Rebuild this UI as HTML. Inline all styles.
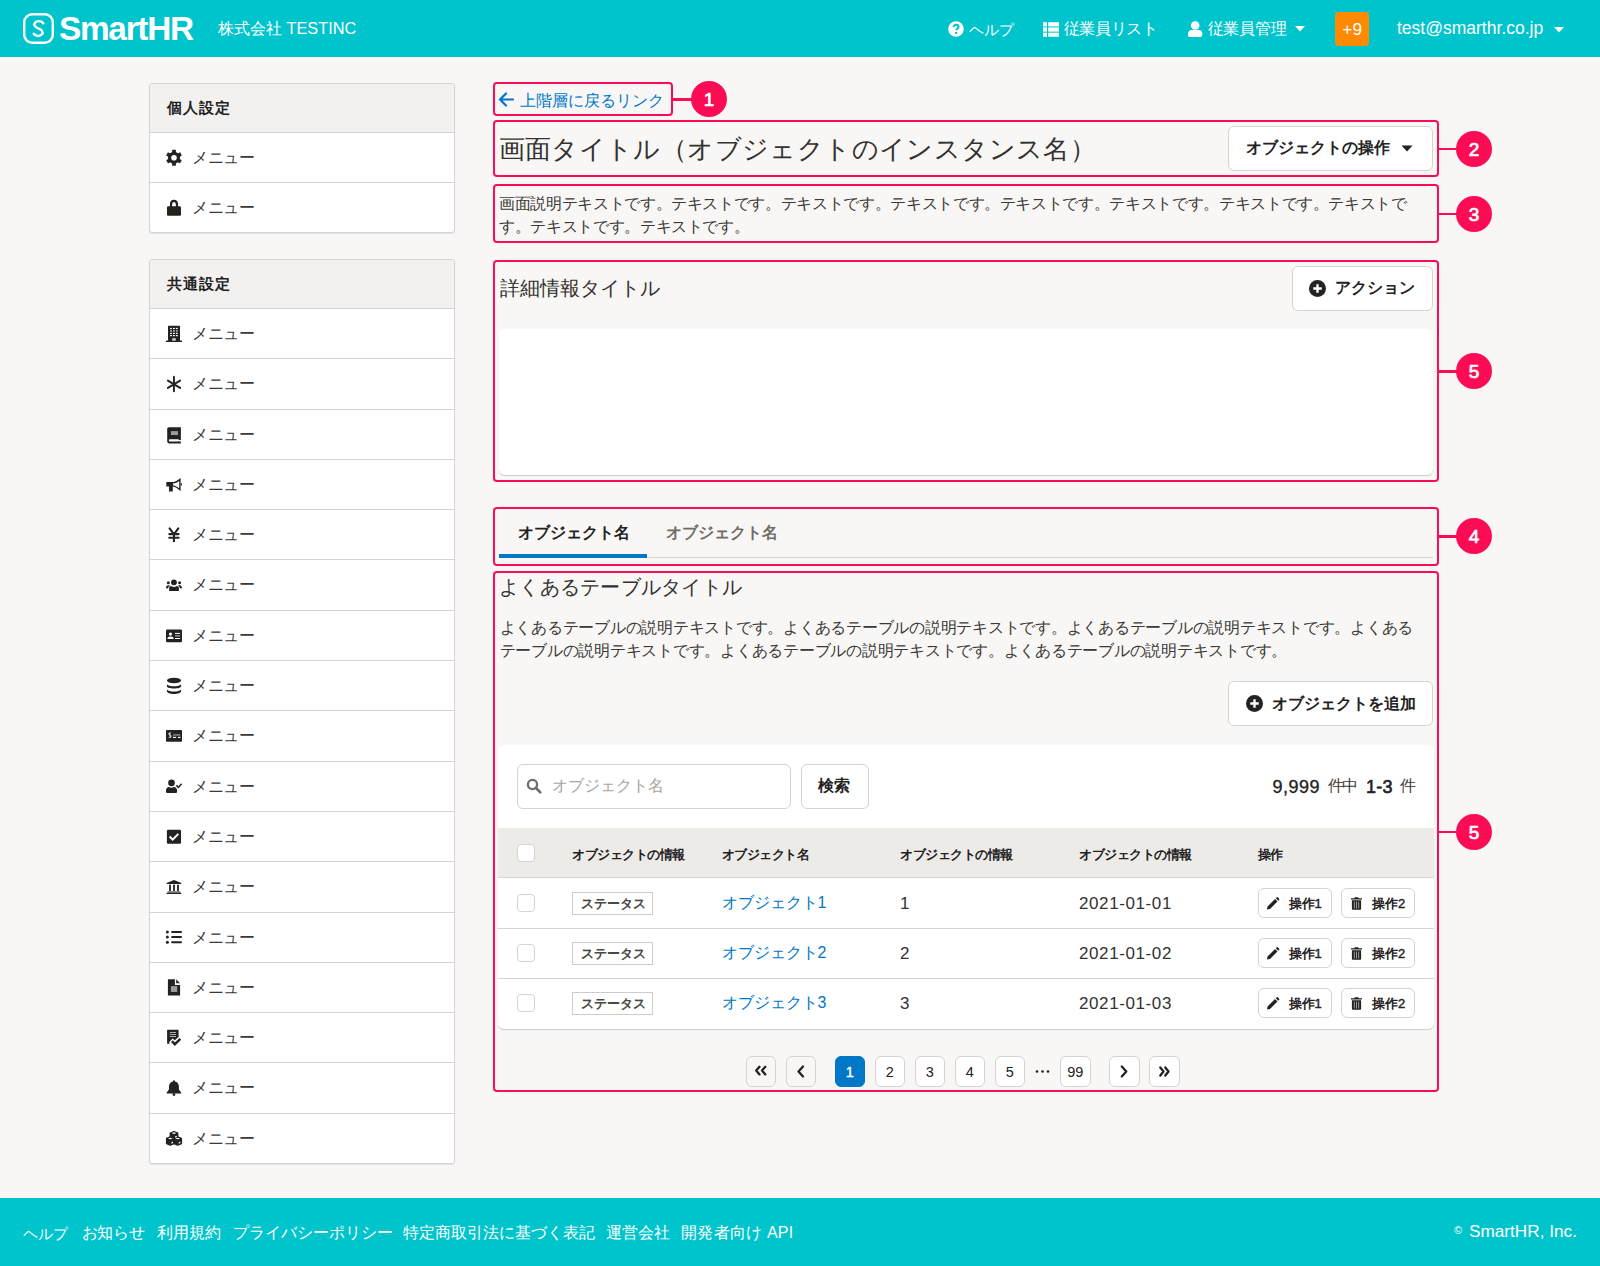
<!DOCTYPE html>
<html lang="ja">
<head>
<meta charset="utf-8">
<style>
*{box-sizing:border-box;margin:0;padding:0}
html,body{width:1600px;height:1266px;overflow:hidden}
body{position:relative;background:#f8f7f6;font-family:"Liberation Sans",sans-serif;color:#23221f;font-size:16px;line-height:1}
.a{position:absolute;white-space:nowrap}
#hdr{position:absolute;left:0;top:0;width:1600px;height:57px;background:#00c4cc;color:#fff}
#ftr{position:absolute;left:0;top:1198px;width:1600px;height:68px;background:#00c4cc;color:#fff}
.card{position:absolute;left:149px;width:306px;background:#fff;border:1px solid #d6d3d0;border-radius:3px;box-shadow:0 1px 1px rgba(0,0,0,.08);overflow:hidden}
.card .hd{height:49px;background:#f2f1f0;border-bottom:1px solid #d6d3d0;position:relative}
.card .hd span{position:absolute;left:16.5px;top:15.5px;font-weight:bold;font-size:15px;letter-spacing:1.1px}
.card .row{height:50.3px;border-bottom:1px solid #d6d3d0;position:relative}
.card .row:last-child{border-bottom:none}
.card .row svg{position:absolute;left:12px;top:12px;width:25px;height:25px;fill:#23221f}
.card .row span{position:absolute;left:42px;top:17px;font-size:16px;letter-spacing:-0.5px;color:#3a3935}
.rb{position:absolute;border:2.5px solid #fd0c56;border-radius:4px}
.rc{position:absolute;width:36px;height:36px;border-radius:50%;background:#fd0c56;color:#fff;font-weight:normal;-webkit-text-stroke:.7px #fff;font-size:19px;text-align:center;line-height:37px}
.rl{position:absolute;height:2.5px;background:#fd0c56}
.btn{position:absolute;background:#fff;border:1px solid #d6d3d0;border-radius:6px}
</style>
</head>
<body>
<div id="hdr">
  <svg class="a" style="left:23px;top:13px" width="31" height="31" viewBox="0 0 31 31"><rect x="1.2" y="1.2" width="28.6" height="28.6" rx="8" fill="none" stroke="#fff" stroke-width="2.4"/><path d="M20.3 10.3C18.8 7.6 13.6 7.4 11.9 9.9C10.3 12.3 12.6 14.3 15.3 15.3M15.7 15.7C18.4 16.7 20.7 18.7 19.1 21.1C17.4 23.6 12.2 23.4 10.7 20.7" fill="none" stroke="#fff" stroke-width="2.4" stroke-linecap="round"/></svg>
  <div class="a" style="left:59px;top:12px;font-size:33.4px;font-weight:bold;letter-spacing:-1.3px">SmartHR</div>
  <div class="a" style="left:218px;top:20px;font-size:16.3px">株式会社 TESTINC</div>
  <svg class="a" style="left:947.5px;top:21px" width="16" height="16" viewBox="0 0 16 16"><circle cx="8" cy="8" r="7.8" fill="#fff"/><path d="M5.6 6.1C5.6 4.7 6.7 3.8 8.1 3.8S10.5 4.7 10.5 6C10.5 7.6 8.3 7.7 8.3 9.3" stroke="#00c4cc" stroke-width="2" fill="none"/><circle cx="8.2" cy="11.9" r="1.2" fill="#00c4cc"/></svg>
  <div class="a" style="left:968.5px;top:21.5px;font-size:15.3px">ヘルプ</div>
  <svg class="a" style="left:1042.5px;top:21.5px" width="16" height="15" viewBox="0 0 16 14.5"><g fill="#fff"><rect x="0" y="0" width="4" height="4.2"/><rect x="5.2" y="0" width="10.8" height="4.2"/><rect x="0" y="5.2" width="4" height="4.2"/><rect x="5.2" y="5.2" width="10.8" height="4.2"/><rect x="0" y="10.4" width="4" height="4.1"/><rect x="5.2" y="10.4" width="10.8" height="4.1"/></g></svg>
  <div class="a" style="left:1063.5px;top:20.5px;font-size:16px;letter-spacing:-0.28px">従業員リスト</div>
  <svg class="a" style="left:1187.5px;top:21px" width="15" height="16" viewBox="0 0 15 16"><circle cx="7.2" cy="4.5" r="4.3" fill="#fff"/><path d="M0 14V12.8C0 10.6 1.6 8.9 3.6 8.9H10.8C12.8 8.9 14.3 10.6 14.3 12.8V14Q14.3 16 12.4 16H1.9Q0 16 0 14Z" fill="#fff"/></svg>
  <div class="a" style="left:1207.5px;top:21px;font-size:16px;letter-spacing:-0.2px">従業員管理</div>
  <svg class="a" style="left:1295px;top:26px" width="10" height="6" viewBox="0 0 10 6"><path d="M0 0H10L5 5.6Z" fill="#fff"/></svg>
  <div class="a" style="left:1335px;top:11.5px;width:34px;height:34px;background:#ff8a00;border-radius:4px"></div>
  <div class="a" style="left:1342.3px;top:20.5px;font-size:17.3px">+9</div>
  <div class="a" style="left:1397px;top:20px;font-size:17.5px">test@smarthr.co.jp</div>
  <svg class="a" style="left:1553.5px;top:26.5px" width="10" height="6" viewBox="0 0 10 6"><path d="M0 0H10L5 5.6Z" fill="#fff"/></svg>
</div>

<div class="card" style="top:83px;height:150px">
  <div class="hd"><span>個人設定</span></div>
  <div class="row"><svg viewBox="0 0 25 25"><g transform="translate(12,12.8)"><circle r="6"/><rect x="-1.9" y="-8" width="3.8" height="3.5" rx=".5" transform="rotate(0)"/><rect x="-1.9" y="-8" width="3.8" height="3.5" rx=".5" transform="rotate(60)"/><rect x="-1.9" y="-8" width="3.8" height="3.5" rx=".5" transform="rotate(120)"/><rect x="-1.9" y="-8" width="3.8" height="3.5" rx=".5" transform="rotate(180)"/><rect x="-1.9" y="-8" width="3.8" height="3.5" rx=".5" transform="rotate(240)"/><rect x="-1.9" y="-8" width="3.8" height="3.5" rx=".5" transform="rotate(300)"/><circle r="2.8" fill="#fff"/></g></svg><span>メニュー</span></div>
  <div class="row"><svg viewBox="0 0 25 25"><path d="M9 12V9.5C9 7.3 10.3 5.9 12 5.9S15 7.3 15 9.5V12" stroke="#23221f" stroke-width="2.2" fill="none"/><rect x="5" y="11.3" width="14" height="9.5" rx="1.3"/></svg><span>メニュー</span></div>
</div>

<div class="card" style="top:259px;height:905px">
  <div class="hd"><span>共通設定</span></div>
  <div class="row"><svg viewBox="0 0 25 25"><g transform="translate(0,-1)"><rect x="6" y="5.8" width="12" height="15.2" rx="0.8"/><rect x="4" y="20.6" width="16" height="1.3" rx=".5"/><g fill="#fff"><rect x="8.1" y="7.9" width="1.8" height="1.2"/><rect x="11" y="7.9" width="1.8" height="1.2"/><rect x="13.9" y="7.9" width="1.8" height="1.2"/><rect x="8.1" y="10.2" width="1.8" height="1.5" fill="#bbb"/><rect x="11" y="10.2" width="1.8" height="1.5" fill="#bbb"/><rect x="13.9" y="10.2" width="1.8" height="1.5" fill="#bbb"/><rect x="8.1" y="12.8" width="1.8" height="1.2"/><rect x="11" y="12.8" width="1.8" height="1.2"/><rect x="13.9" y="12.8" width="1.8" height="1.2"/><rect x="8.1" y="15" width="1.8" height="1.2"/><rect x="11" y="15" width="1.8" height="1.2"/><rect x="13.9" y="15" width="1.8" height="1.2"/><rect x="10.2" y="18.2" width="3.6" height="2.5" fill="#ccc"/></g></g></svg><span>メニュー</span></div>
  <div class="row"><svg viewBox="0 0 25 25"><g stroke="#23221f" stroke-width="1.9" stroke-linecap="round" fill="none"><path d="M11.95 5.8V20.2M5.9 9.6L18.1 16.9M18.1 9.6L5.9 16.9"/></g></svg><span>メニュー</span></div>
  <div class="row"><svg viewBox="0 0 25 25"><path d="M6.8 5.3H18.9V18H17V19.6H18.9V21.4H7.4C6.1 21.4 5.2 20.4 5.2 19.2V7C5.2 6 5.9 5.3 6.8 5.3Z"/><rect x="8.9" y="9.1" width="7.1" height="3.9" fill="#9a9a9a"/><rect x="6.9" y="17.3" width="10.1" height="2.1" rx="1" fill="#fff"/></svg><span>メニュー</span></div>
  <div class="row"><svg viewBox="0 0 25 25"><path d="M4.3 10.2Q4.3 9.9 4.6 9.9H10.6C13.5 9.9 15.8 8.4 18.6 6V19.3C15.8 16.9 13.5 14.6 10.8 14.6V19.6H7V14.6H4.6Q4.3 14.6 4.3 14.3Z"/><path d="M11 11.5C13.3 11.3 15.3 10.5 17.2 9.1V16.3C15.3 14.8 13.3 13.6 11 13.2Z" fill="#fff"/><rect x="18.8" y="11.2" width="1.1" height="2.4"/></svg><span>メニュー</span></div>
  <div class="row"><svg viewBox="0 0 25 25"><g stroke="#23221f" stroke-width="2.1" fill="none" stroke-linecap="round"><path d="M7.6 6.4L11.95 12.3L16.3 6.4M11.95 12.3V19.2M7.3 12.1H16.6M7.3 15.8H16.6"/></g></svg><span>メニュー</span></div>
  <div class="row"><svg viewBox="0 0 25 25"><circle cx="11.95" cy="10.3" r="2.9"/><path d="M7.1 18.5V15.8C7.1 14.6 8 13.9 9.1 13.9C10 14.6 11 14.9 11.95 14.9C12.9 14.9 13.9 14.6 14.8 13.9C15.9 13.9 16.9 14.6 16.9 15.8V18.5Q16.9 19 16.4 19H7.6Q7.1 19 7.1 18.5Z"/><circle cx="6.3" cy="10.7" r="1.5"/><circle cx="17.6" cy="10.7" r="1.5"/><path d="M4 16.2C4 14.5 5 13.3 6.2 13.3H7.9C7 14.2 6.3 15.2 5.8 16.5Z"/><path d="M20 16.2C20 14.5 19 13.3 17.8 13.3H16.1C17 14.2 17.7 15.2 18.2 16.5Z"/></svg><span>メニュー</span></div>
  <div class="row"><svg viewBox="0 0 25 25"><rect x="4" y="6.4" width="16" height="12.8" rx="1.2"/><g fill="#fff"><circle cx="8.5" cy="11.1" r="1.6"/><path d="M5.3 16C5.5 14.2 6.8 13.5 8.5 13.5S11.5 14.2 11.7 16Z"/><rect x="13" y="9.9" width="5.1" height="1"/><rect x="13" y="12.3" width="5.1" height="1.2" fill="#aaa"/><rect x="13" y="15" width="5.1" height="1"/></g></svg><span>メニュー</span></div>
  <div class="row"><svg viewBox="0 0 25 25"><ellipse cx="12" cy="7.5" rx="7.1" ry="2.8"/><path d="M4.9 11.2C6 12.6 8.7 13.3 12 13.3S18 12.6 19.1 11.2V13.3C19.1 14.6 16 15.6 12 15.6S4.9 14.6 4.9 13.3Z"/><path d="M4.9 16.5C6 17.9 8.7 18.6 12 18.6S18 17.9 19.1 16.5V18.2C19.1 19.7 16 20.9 12 20.9S4.9 19.7 4.9 18.2Z"/></svg><span>メニュー</span></div>
  <div class="row"><svg viewBox="0 0 25 25"><rect x="4" y="7.1" width="16" height="11.7" rx="0.8"/><path d="M9 10.2C8.4 9.9 7 10 7 11.1S9 12.1 9 13.3S7.5 14.5 6.8 14" stroke="#ddd" stroke-width="1.3" fill="none"/><g fill="#fff"><rect x="11" y="11.3" width="7.2" height="1.3" fill="#999"/><rect x="11" y="13.8" width="3.2" height="1.2"/><rect x="16" y="13.8" width="2.4" height="1.2"/></g></svg><span>メニュー</span></div>
  <div class="row"><svg viewBox="0 0 25 25"><circle cx="9.5" cy="8.9" r="3.3"/><path d="M4 17.8V16.2C4 14.3 5.5 13 7 13C7.8 13.6 8.6 13.8 9.5 13.8S11.2 13.6 12 13C13.6 13 15.1 14.3 15.1 16.2V17.8Q15.1 19 13.9 19H5.2Q4 19 4 17.8Z"/><path d="M14.3 11.4L16.4 13.4L19.6 9.7" stroke="#23221f" stroke-width="1.5" fill="none"/></svg><span>メニュー</span></div>
  <div class="row"><svg viewBox="0 0 25 25"><rect x="4.9" y="5.7" width="14.1" height="14" rx="1.3"/><path d="M7.6 12.5L10.7 15.6L16.3 9.9" stroke="#fff" stroke-width="2" fill="none"/></svg><span>メニュー</span></div>
  <div class="row"><svg viewBox="0 0 25 25"><path d="M12 5.9L19.3 9V10.1H4.6V9Z"/><rect x="7.1" y="10.7" width="1.8" height="6.4"/><rect x="11.1" y="10.7" width="1.8" height="6.4"/><rect x="15.1" y="10.7" width="1.8" height="6.4"/><path d="M5.9 17.2H18.1L19.4 19.9H4.5Z" fill="#6f6e6a"/><rect x="4.5" y="19" width="14.9" height="0.9"/></svg><span>メニュー</span></div>
  <div class="row"><svg viewBox="0 0 25 25"><circle cx="5.4" cy="7.1" r="1.5"/><circle cx="5.4" cy="12.1" r="1.5"/><circle cx="5.4" cy="17.2" r="1.5"/><rect x="9.1" y="6.1" width="10.9" height="2" rx="1"/><rect x="9.1" y="11.1" width="10.9" height="2" rx="1"/><rect x="9.1" y="16.2" width="10.9" height="2" rx="1"/></svg><span>メニュー</span></div>
  <div class="row"><svg viewBox="0 0 25 25"><path d="M6.4 4.2H12.9V10H18.1V19.9Q18.1 20.5 17.5 20.5H6.4Q5.9 20.5 5.9 19.9V4.8Q5.9 4.2 6.4 4.2Z"/><path d="M14.2 4.3L18 8.2H14.2Z"/><rect x="8.9" y="11.1" width="6.3" height="5.9" fill="#999"/></svg><span>メニュー</span></div>
  <div class="row"><svg viewBox="0 0 25 25"><path d="M5.6 4.7H16.1Q16.6 4.7 16.6 5.2V11.9L12.8 15.3L10.6 13.5L7.4 16.7V18.7H5.6Q5.1 18.7 5.1 18.2V5.2Q5.1 4.7 5.6 4.7Z"/><g fill="#aaa"><rect x="7.7" y="7" width="6.3" height="1"/><rect x="7.7" y="9" width="6.3" height="1"/><rect x="7.7" y="11" width="6.3" height="1"/></g><path d="M9.9 16.2L12.8 19.2L18.4 13.9" stroke="#23221f" stroke-width="2.4" fill="none"/></svg><span>メニュー</span></div>
  <div class="row"><svg viewBox="0 0 25 25"><path d="M11.95 4.9Q12.8 4.9 12.9 6.6C15.4 7 16.9 8.9 16.9 11.6V14.4L19.2 17.5V18.6H4.7V17.5L7 14.4V11.6C7 8.9 8.5 7 11 6.6Q11.1 4.9 11.95 4.9Z"/><circle cx="11.95" cy="19.6" r="1.4"/></svg><span>メニュー</span></div>
  <div class="row"><svg viewBox="0 0 25 25"><g stroke="#23221f" stroke-width="1.4" stroke-linejoin="round"><path d="M8.3 7.1L12 5.6L15.7 7.1V11.5L12 13L8.3 11.5Z" fill="#23221f"/><path d="M4.6 12.5L8.3 11L12 12.5V17.6L8.3 19.1L4.6 17.6Z" fill="#23221f"/><path d="M12 12.5L15.7 11L19.4 12.5V17.6L15.7 19.1L12 17.6Z" fill="#23221f"/></g><g fill="#fff"><path d="M9.6 7.1L12 6.3L14.4 7.1L12 7.9Z"/><path d="M5.9 12.5L8.3 11.8L10.7 12.5L8.3 13.3Z"/><path d="M13.3 12.5L15.7 11.8L18.1 12.5L15.7 13.3Z"/><path d="M13 10.6L14.8 9.8V10.9L13 11.7Z"/><path d="M9.3 16.4L11 15.6V16.9L9.3 17.7Z"/><path d="M16.7 16.4L18.4 15.6V16.9L16.7 17.7Z"/></g></svg><span>メニュー</span></div>
</div>


<!-- back link -->
<svg class="a" style="left:498px;top:92px" width="17" height="16" viewBox="0 0 17 16"><path d="M8 1.5L2 7.5L8 13.5M2.5 7.5H15" stroke="#0077c7" stroke-width="2.2" fill="none" stroke-linecap="round" stroke-linejoin="round"/></svg>
<div class="a" style="left:520px;top:92.5px;font-size:16px;color:#0077c7;letter-spacing:0px">上階層に戻るリンク</div>
<div class="rb" style="left:493px;top:82px;width:180px;height:34px"></div>
<div class="rl" style="left:672px;top:98px;width:20px"></div>
<div class="rc" style="left:691px;top:81px">1</div>

<!-- title -->
<div class="a" style="left:498.5px;top:136px;font-size:26px;letter-spacing:.4px;color:#33322e">画面タイトル（オブジェクトのインスタンス名）</div>
<div class="btn" style="left:1228px;top:126px;width:205px;height:45px"></div>
<div class="a" style="left:1246px;top:140px;font-size:16px;font-weight:bold">オブジェクトの操作</div>
<svg class="a" style="left:1401px;top:145px" width="12" height="7" viewBox="0 0 12 7"><path d="M0.5 0.5H11.5L6 6.5Z" fill="#23221f"/></svg>
<div class="rb" style="left:493px;top:120px;width:946px;height:57px"></div>
<div class="rl" style="left:1437px;top:147.5px;width:20px"></div>
<div class="rc" style="left:1456px;top:130.5px">2</div>

<!-- description -->
<div class="a" style="left:499px;top:191.5px;font-size:16px;line-height:23.5px;letter-spacing:-0.35px;color:#3a3935">画面説明テキストです。テキストです。テキストです。テキストです。テキストです。テキストです。テキストです。テキストで<br>す。テキストです。テキストです。</div>
<div class="rb" style="left:493px;top:184px;width:946px;height:59px"></div>
<div class="rl" style="left:1437px;top:212.5px;width:20px"></div>
<div class="rc" style="left:1456px;top:196px">3</div>

<!-- detail -->
<div class="a" style="left:500px;top:277.5px;font-size:20px;color:#33322e">詳細情報タイトル</div>
<div class="btn" style="left:1292px;top:265.5px;width:141px;height:45px"></div>
<svg class="a" style="left:1309px;top:280px" width="17" height="17" viewBox="0 0 16 16"><circle cx="8" cy="8" r="8" fill="#23221f"/><path d="M8 4V12M4 8H12" stroke="#fff" stroke-width="2.2"/></svg>
<div class="a" style="left:1335px;top:280px;font-size:16px;font-weight:bold">アクション</div>
<div class="a" style="left:499px;top:329px;width:934px;height:146px;background:#fff;border-radius:6px;box-shadow:0 1px 1px rgba(0,0,0,.18)"></div>
<div class="rb" style="left:493px;top:260px;width:946px;height:221.5px"></div>
<div class="rl" style="left:1437px;top:370px;width:20px"></div>
<div class="rc" style="left:1456px;top:353px">5</div>

<!-- tabs -->
<div class="a" style="left:518px;top:525px;font-size:16px;font-weight:bold">オブジェクト名</div>
<div class="a" style="left:666px;top:525px;font-size:16px;font-weight:bold;color:#706d65">オブジェクト名</div>
<div class="a" style="left:499px;top:556.5px;width:934px;height:1px;background:#d6d3d0"></div>
<div class="a" style="left:499px;top:554.3px;width:148px;height:3.5px;background:#0077c7"></div>
<div class="rb" style="left:493px;top:507px;width:946px;height:58.5px"></div>
<div class="rl" style="left:1437px;top:535px;width:20px"></div>
<div class="rc" style="left:1456px;top:518px">4</div>

<!-- table section -->
<div class="a" style="left:499px;top:577px;font-size:20px;letter-spacing:.25px;color:#33322e">よくあるテーブルタイトル</div>
<div class="a" style="left:499.5px;top:615.5px;font-size:16px;line-height:23.5px;letter-spacing:-0.25px;color:#3a3935">よくあるテーブルの説明テキストです。よくあるテーブルの説明テキストです。よくあるテーブルの説明テキストです。よくある<br>テーブルの説明テキストです。よくあるテーブルの説明テキストです。よくあるテーブルの説明テキストです。</div>
<div class="btn" style="left:1228px;top:681px;width:205px;height:45px"></div>
<svg class="a" style="left:1246px;top:694.5px" width="17" height="17" viewBox="0 0 16 16"><circle cx="8" cy="8" r="8" fill="#23221f"/><path d="M8 4V12M4 8H12" stroke="#fff" stroke-width="2.2"/></svg>
<div class="a" style="left:1272px;top:696px;font-size:16px;font-weight:bold">オブジェクトを追加</div>

<div class="a" style="left:498px;top:745px;width:935.5px;height:283.5px;background:#fff;border-radius:6px;box-shadow:0 1px 1px rgba(0,0,0,.18);overflow:hidden">
  <div class="a" style="left:19px;top:19px;width:274px;height:45px;border:1px solid #d6d3d0;border-radius:6px;"></div>
  <svg class="a" style="left:28px;top:33px" width="16" height="16" viewBox="0 0 16 16"><circle cx="6.5" cy="6.5" r="4.6" stroke="#706d65" stroke-width="2.3" fill="none"/><path d="M10 10L14.3 14.3" stroke="#706d65" stroke-width="2.6" stroke-linecap="round"/></svg>
  <div class="a" style="left:54px;top:33px;font-size:16px;color:#a8a59d">オブジェクト名</div>
  <div class="a" style="left:302.5px;top:19px;width:68px;height:45px;border:1px solid #d6d3d0;border-radius:6px;background:#fff"></div>
  <div class="a" style="left:320px;top:33px;font-size:16px;font-weight:bold">検索</div>
  <div class="a" style="left:774.5px;top:33px;font-size:18px;letter-spacing:.5px;-webkit-text-stroke:.35px #23221f">9,999</div>
  <div class="a" style="left:829.5px;top:32.5px;font-size:16px;letter-spacing:-1.2px;color:#3a3935">件中</div>
  <div class="a" style="left:868px;top:33px;font-size:18px;letter-spacing:.3px;-webkit-text-stroke:.6px #23221f">1-3</div>
  <div class="a" style="left:901.5px;top:32.5px;font-size:16px;color:#3a3935">件</div>

  <div class="a" style="left:0;top:83px;width:935.5px;height:50px;background:#edebe8;border-bottom:1px solid #d6d3d0"></div>
  <div class="a" style="left:0;top:182.5px;width:935.5px;height:1px;background:#d6d3d0"></div>
  <div class="a" style="left:0;top:232.5px;width:935.5px;height:1px;background:#d6d3d0"></div>
  <div class="a" style="left:19px;top:99px;width:18px;height:18px;border:1px solid #d6d3d0;border-radius:4px;background:#fff"></div>
  <div class="a" style="left:74px;top:103px;font-size:13px;letter-spacing:-.5px;font-weight:bold">オブジェクトの情報</div>
  <div class="a" style="left:223.5px;top:103px;font-size:13px;letter-spacing:-.5px;font-weight:bold">オブジェクト名</div>
  <div class="a" style="left:402px;top:103px;font-size:13px;letter-spacing:-.5px;font-weight:bold">オブジェクトの情報</div>
  <div class="a" style="left:581px;top:103px;font-size:13px;letter-spacing:-.5px;font-weight:bold">オブジェクトの情報</div>
  <div class="a" style="left:759.5px;top:103px;font-size:13px;letter-spacing:-.5px;font-weight:bold">操作</div>
  <div class="a" style="left:0;top:133.5px;width:935.5px;height:50px">
    <div class="a" style="left:19px;top:15.5px;width:18px;height:18px;border:1px solid #d6d3d0;border-radius:4px;background:#fff"></div>
    <div class="a" style="left:74px;top:13.5px;width:81px;height:23px;border:1px solid #cfccc8;background:#fff"></div>
    <div class="a" style="left:83px;top:18px;font-size:13px;font-weight:bold;color:#4a4844;letter-spacing:0px">ステータス</div>
    <div class="a" style="left:223.5px;top:16px;font-size:16px;color:#0077c7;letter-spacing:0px">オブジェクト1</div>
    <div class="a" style="left:402px;top:16px;font-size:17px;color:#33322e">1</div>
    <div class="a" style="left:581px;top:16px;font-size:17px;letter-spacing:.6px;color:#33322e">2021-01-01</div>
    <div class="a" style="left:759.5px;top:9px;width:74px;height:30.5px;border:1px solid #d6d3d0;border-radius:6px;"><svg class="a" style="left:7.5px;top:8px" width="13.5" height="13.5" viewBox="0 0 14 14"><path d="M1 13L1.6 9.9L9.4 2.1L11.9 4.6L4.1 12.4Z M10.2 1.3L11.2 0.3Q11.7 -.1 12.2 .3L13.7 1.8Q14.1 2.3 13.7 2.8L12.7 3.8Z" fill="#23221f"/></svg><div class="a" style="left:30px;top:8.3px;font-size:13px;font-weight:bold;letter-spacing:0px">操作<span style="font-weight:normal;-webkit-text-stroke:.4px #23221f">1</span></div></div>
    <div class="a" style="left:843px;top:9px;width:73.5px;height:30.5px;border:1px solid #d6d3d0;border-radius:6px;"><svg class="a" style="left:9px;top:8.5px" width="11" height="13" viewBox="0 0 11 13"><path d="M0 1.2H3.3L3.8 .2H7.2L7.7 1.2H11V2.6H0Z M.9 3.3H10.1V11.8Q10.1 12.8 9.1 12.8H1.9Q.9 12.8 .9 11.8Z" fill="#23221f"/><path d="M3.3 4.6V11.5M5.5 4.6V11.5M7.7 4.6V11.5" stroke="#fff" stroke-width=".75" opacity=".75"/></svg><div class="a" style="left:30px;top:8.3px;font-size:13px;font-weight:bold;letter-spacing:0px">操作<span style="font-weight:normal;-webkit-text-stroke:.4px #23221f">2</span></div></div>
  </div>
  <div class="a" style="left:0;top:183.5px;width:935.5px;height:50px">
    <div class="a" style="left:19px;top:15.5px;width:18px;height:18px;border:1px solid #d6d3d0;border-radius:4px;background:#fff"></div>
    <div class="a" style="left:74px;top:13.5px;width:81px;height:23px;border:1px solid #cfccc8;background:#fff"></div>
    <div class="a" style="left:83px;top:18px;font-size:13px;font-weight:bold;color:#4a4844;letter-spacing:0px">ステータス</div>
    <div class="a" style="left:223.5px;top:16px;font-size:16px;color:#0077c7;letter-spacing:0px">オブジェクト2</div>
    <div class="a" style="left:402px;top:16px;font-size:17px;color:#33322e">2</div>
    <div class="a" style="left:581px;top:16px;font-size:17px;letter-spacing:.6px;color:#33322e">2021-01-02</div>
    <div class="a" style="left:759.5px;top:9px;width:74px;height:30.5px;border:1px solid #d6d3d0;border-radius:6px;"><svg class="a" style="left:7.5px;top:8px" width="13.5" height="13.5" viewBox="0 0 14 14"><path d="M1 13L1.6 9.9L9.4 2.1L11.9 4.6L4.1 12.4Z M10.2 1.3L11.2 0.3Q11.7 -.1 12.2 .3L13.7 1.8Q14.1 2.3 13.7 2.8L12.7 3.8Z" fill="#23221f"/></svg><div class="a" style="left:30px;top:8.3px;font-size:13px;font-weight:bold;letter-spacing:0px">操作<span style="font-weight:normal;-webkit-text-stroke:.4px #23221f">1</span></div></div>
    <div class="a" style="left:843px;top:9px;width:73.5px;height:30.5px;border:1px solid #d6d3d0;border-radius:6px;"><svg class="a" style="left:9px;top:8.5px" width="11" height="13" viewBox="0 0 11 13"><path d="M0 1.2H3.3L3.8 .2H7.2L7.7 1.2H11V2.6H0Z M.9 3.3H10.1V11.8Q10.1 12.8 9.1 12.8H1.9Q.9 12.8 .9 11.8Z" fill="#23221f"/><path d="M3.3 4.6V11.5M5.5 4.6V11.5M7.7 4.6V11.5" stroke="#fff" stroke-width=".75" opacity=".75"/></svg><div class="a" style="left:30px;top:8.3px;font-size:13px;font-weight:bold;letter-spacing:0px">操作<span style="font-weight:normal;-webkit-text-stroke:.4px #23221f">2</span></div></div>
  </div>
  <div class="a" style="left:0;top:233.5px;width:935.5px;height:50px">
    <div class="a" style="left:19px;top:15.5px;width:18px;height:18px;border:1px solid #d6d3d0;border-radius:4px;background:#fff"></div>
    <div class="a" style="left:74px;top:13.5px;width:81px;height:23px;border:1px solid #cfccc8;background:#fff"></div>
    <div class="a" style="left:83px;top:18px;font-size:13px;font-weight:bold;color:#4a4844;letter-spacing:0px">ステータス</div>
    <div class="a" style="left:223.5px;top:16px;font-size:16px;color:#0077c7;letter-spacing:0px">オブジェクト3</div>
    <div class="a" style="left:402px;top:16px;font-size:17px;color:#33322e">3</div>
    <div class="a" style="left:581px;top:16px;font-size:17px;letter-spacing:.6px;color:#33322e">2021-01-03</div>
    <div class="a" style="left:759.5px;top:9px;width:74px;height:30.5px;border:1px solid #d6d3d0;border-radius:6px;"><svg class="a" style="left:7.5px;top:8px" width="13.5" height="13.5" viewBox="0 0 14 14"><path d="M1 13L1.6 9.9L9.4 2.1L11.9 4.6L4.1 12.4Z M10.2 1.3L11.2 0.3Q11.7 -.1 12.2 .3L13.7 1.8Q14.1 2.3 13.7 2.8L12.7 3.8Z" fill="#23221f"/></svg><div class="a" style="left:30px;top:8.3px;font-size:13px;font-weight:bold;letter-spacing:0px">操作<span style="font-weight:normal;-webkit-text-stroke:.4px #23221f">1</span></div></div>
    <div class="a" style="left:843px;top:9px;width:73.5px;height:30.5px;border:1px solid #d6d3d0;border-radius:6px;"><svg class="a" style="left:9px;top:8.5px" width="11" height="13" viewBox="0 0 11 13"><path d="M0 1.2H3.3L3.8 .2H7.2L7.7 1.2H11V2.6H0Z M.9 3.3H10.1V11.8Q10.1 12.8 9.1 12.8H1.9Q.9 12.8 .9 11.8Z" fill="#23221f"/><path d="M3.3 4.6V11.5M5.5 4.6V11.5M7.7 4.6V11.5" stroke="#fff" stroke-width=".75" opacity=".75"/></svg><div class="a" style="left:30px;top:8.3px;font-size:13px;font-weight:bold;letter-spacing:0px">操作<span style="font-weight:normal;-webkit-text-stroke:.4px #23221f">2</span></div></div>
  </div>
</div>
<div class="a" style="left:745.5px;top:1056px;width:30.5px;height:30.5px;border:1px solid #d6d3d0;border-radius:6px;background:transparent"><svg style="position:absolute;left:0;top:0" width="29" height="29" viewBox="0 0 29 29"><path d="M12.5 9.8L9.2 13.6L12.5 17.4M18.3 9.8L15 13.6L18.3 17.4" stroke="#23221f" stroke-width="2.3" fill="none" stroke-linecap="round" stroke-linejoin="round"/></svg></div>
<div class="a" style="left:785.5px;top:1056px;width:30.5px;height:30.5px;border:1px solid #d6d3d0;border-radius:6px;background:transparent"><svg style="position:absolute;left:0;top:0" width="29" height="29" viewBox="0 0 29 29"><path d="M16 9.5L11.5 14.5L16 19.5" stroke="#23221f" stroke-width="2.3" fill="none" stroke-linecap="round" stroke-linejoin="round"/></svg></div>
<div class="a" style="left:834.5px;top:1056px;width:30.5px;height:30.5px;border:1px solid #d6d3d0;border-radius:6px;background:#0077c7;border-color:#0077c7;color:#fff"><div style="position:absolute;left:0;top:7.8px;width:100%;text-align:center;font-size:14.5px;-webkit-text-stroke:.4px #fff">1</div></div>
<div class="a" style="left:874.5px;top:1056px;width:30.5px;height:30.5px;border:1px solid #d6d3d0;border-radius:6px;background:#fff"><div style="position:absolute;left:0;top:7.8px;width:100%;text-align:center;font-size:14.5px;">2</div></div>
<div class="a" style="left:914.5px;top:1056px;width:30.5px;height:30.5px;border:1px solid #d6d3d0;border-radius:6px;background:#fff"><div style="position:absolute;left:0;top:7.8px;width:100%;text-align:center;font-size:14.5px;">3</div></div>
<div class="a" style="left:954.5px;top:1056px;width:30.5px;height:30.5px;border:1px solid #d6d3d0;border-radius:6px;background:#fff"><div style="position:absolute;left:0;top:7.8px;width:100%;text-align:center;font-size:14.5px;">4</div></div>
<div class="a" style="left:994.5px;top:1056px;width:30.5px;height:30.5px;border:1px solid #d6d3d0;border-radius:6px;background:#fff"><div style="position:absolute;left:0;top:7.8px;width:100%;text-align:center;font-size:14.5px;">5</div></div>
<svg class="a" style="left:1035px;top:1069px" width="15" height="5" viewBox="0 0 15 5"><circle cx="2" cy="2.5" r="1.3" fill="#23221f"/><circle cx="7.5" cy="2.5" r="1.3" fill="#23221f"/><circle cx="13" cy="2.5" r="1.3" fill="#23221f"/></svg>
<div class="a" style="left:1060px;top:1056px;width:30.5px;height:30.5px;border:1px solid #d6d3d0;border-radius:6px;background:#fff"><div style="position:absolute;left:0;top:7.8px;width:100%;text-align:center;font-size:14.5px;">99</div></div>
<div class="a" style="left:1109px;top:1056px;width:30.5px;height:30.5px;border:1px solid #d6d3d0;border-radius:6px;background:#fff"><svg style="position:absolute;left:0;top:0" width="29" height="29" viewBox="0 0 29 29"><path d="M11.8 9.5L16.3 14.5L11.8 19.5" stroke="#23221f" stroke-width="2.3" fill="none" stroke-linecap="round" stroke-linejoin="round"/></svg></div>
<div class="a" style="left:1149px;top:1056px;width:30.5px;height:30.5px;border:1px solid #d6d3d0;border-radius:6px;background:#fff"><svg style="position:absolute;left:0;top:0" width="29" height="29" viewBox="0 0 29 29"><path d="M10.3 10.5L13.5 14.5L10.3 18.5M15.3 10.5L18.5 14.5L15.3 18.5" stroke="#23221f" stroke-width="2.3" fill="none" stroke-linecap="round" stroke-linejoin="round"/></svg></div>
<div class="rb" style="left:493px;top:570.5px;width:946px;height:521.5px"></div>
<div class="rl" style="left:1437px;top:830.5px;width:20px"></div>
<div class="rc" style="left:1456px;top:813.5px">5</div>


<div id="ftr">
  <div class="a" style="left:23px;top:28px;font-size:15.3px">ヘルプ</div>
  <div class="a" style="left:81.5px;top:27px;font-size:16px;letter-spacing:-.3px">お知らせ</div>
  <div class="a" style="left:157px;top:27px;font-size:16px">利用規約</div>
  <div class="a" style="left:233px;top:27px;font-size:16px">プライバシーポリシー</div>
  <div class="a" style="left:403px;top:27px;font-size:16px">特定商取引法に基づく表記</div>
  <div class="a" style="left:606px;top:27px;font-size:16px">運営会社</div>
  <div class="a" style="left:681px;top:27px;font-size:16px;letter-spacing:.25px">開発者向け API</div>
  <div class="a" style="left:1454px;top:27px;font-size:11px">©</div>
  <div class="a" style="left:1469px;top:25px;font-size:17.2px">SmartHR, Inc.</div>
</div>
</body>
</html>
